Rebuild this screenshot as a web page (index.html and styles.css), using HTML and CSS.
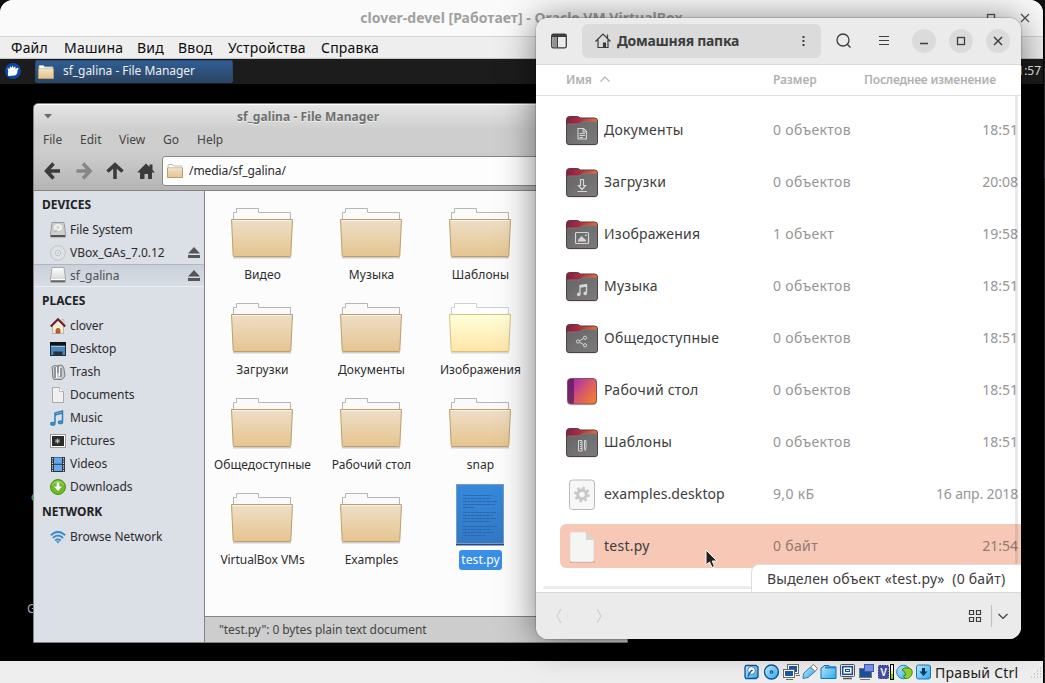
FILE: index.html
```
<!DOCTYPE html>
<html lang="ru">
<head>
<meta charset="utf-8">
<title>clover-devel</title>
<link rel="stylesheet" href="styles.css">
</head>
<body>
<svg width="0" height="0" class="defs">
  <defs>
    <linearGradient id="gTan" x1="0" y1="0" x2="0" y2="1"><stop offset="0" stop-color="#eedfc8"/><stop offset="1" stop-color="#e6c48f"/></linearGradient>
    <linearGradient id="gYel" x1="0" y1="0" x2="0" y2="1"><stop offset="0" stop-color="#ffffdc"/><stop offset="1" stop-color="#ffe6a6"/></linearGradient>
    <linearGradient id="gBlue" x1="0" y1="0" x2="0" y2="1"><stop offset="0" stop-color="#3689dd"/><stop offset="1" stop-color="#3279c5"/></linearGradient>
    <linearGradient id="gTab" x1="0" y1="0" x2="1" y2="0"><stop offset="0" stop-color="#861e42"/><stop offset=".45" stop-color="#a83246"/><stop offset="1" stop-color="#f0702c"/></linearGradient>
    <linearGradient id="gGrey" x1="0" y1="0" x2="1" y2="1"><stop offset="0" stop-color="#646464"/><stop offset="1" stop-color="#7c7c7c"/></linearGradient>
    <linearGradient id="gDesk" x1="0" y1="0" x2="1" y2=".7"><stop offset="0" stop-color="#a42a98"/><stop offset=".3" stop-color="#b43c98"/><stop offset=".6" stop-color="#d6586a"/><stop offset="1" stop-color="#f37a35"/></linearGradient>
    <linearGradient id="gSky" x1="0" y1="0" x2="1" y2="1"><stop offset="0" stop-color="#c5f1ff"/><stop offset="1" stop-color="#28a9ee"/></linearGradient>
    <linearGradient id="gDisk" x1="0" y1="0" x2="0" y2="1"><stop offset="0" stop-color="#fff"/><stop offset="1" stop-color="#cfcfcf"/></linearGradient>
    <symbol id="folder" viewBox="0 0 64 54">
      <path d="M3.500 12V5.500H6.500V1.500H28.500V5.500H60.500V12" fill="#fafafa" stroke="#b6b6ba"/>
      <path d="M3 50.500h58" stroke="#000" stroke-opacity=".18" stroke-width="2"/>
      <path d="M1.500 12.500H62.500L60.800 48.500Q60.700 49.500 59.800 49.500H4.200Q3.300 49.500 3.200 48.500Z" fill="url(#gTan)" stroke="#baa06c"/>
      <path d="M2.500 13.500H61.500" stroke="#fff" stroke-opacity=".6"/>
    </symbol>
    <symbol id="folderlit" viewBox="0 0 64 54">
      <path d="M3.500 12V5.500H6.500V1.500H28.500V5.500H60.500V12" fill="#fff" stroke="#d0d0d4"/>
      <path d="M3 50.500h58" stroke="#000" stroke-opacity=".14" stroke-width="2"/>
      <path d="M1.500 12.500H62.500L60.800 48.500Q60.700 49.500 59.800 49.500H4.200Q3.300 49.500 3.200 48.500Z" fill="url(#gYel)" stroke="#d8c084"/>
    </symbol>
    <symbol id="minifolder" viewBox="0 0 16 14">
      <path d="M1 4V1.500Q1 .5 2 .5H5.500L6.500 2H14.500Q15 2 15 3V5" fill="#fff" stroke="#bbb"/>
      <path d="M.5 4H15.500V13.500H.5Z" fill="url(#gTan)" stroke="#b99f6e"/>
      <path d="M1 4.800H15" stroke="#fff" stroke-opacity=".6"/>
    </symbol>
    <symbol id="ufolder" viewBox="0 0 32 30">
      <rect x=".5" y="5" width="31" height="24.500" rx="3" fill="#000" opacity=".2"/>
      <path d="M.5 25V3.500Q.5 .5 3.500 .5H11.500Q13 .5 14 2H28.500Q31.500 2 31.500 5V25Z" fill="url(#gTab)" stroke="#5b3945"/>
      <path d="M.5 8.500Q1.500 7.800 3 7.800H12Q13.500 7.800 14.800 6.500T17.500 5.500H29.500Q31 5.500 31.500 6.500V26Q31.500 28.500 29 28.500H3Q.5 28.500 .5 26Z" fill="url(#gGrey)"/>
      <path d="M.5 8V26Q.5 28.500 3 28.500H29Q31.500 28.500 31.500 26V7" fill="none" stroke="#503f45"/>
      <path d="M1.500 8H12.500Q14.500 8 15.600 6.800T18 5.700H30.800" fill="none" stroke="#8e7a76" stroke-width=".7"/>
    </symbol>
    <symbol id="eject" viewBox="0 0 14 13"><path d="M1 7.500L7 1L13 7.500Z M1 9H13V12H1Z" fill="#555"/></symbol>
  </defs>
</svg>
<main class="screen">
  <section class="vm">
    <header class="vm-title"><b>clover-devel [Работает] - Oracle VM VirtualBox</b>
      <svg class="vm-buttons" width="50" height="16" fill="none" stroke="#555" stroke-width="1.3"><rect x="6.500" y="4.500" width="7" height="7"/><path d="M40 4l8 8m0-8l-8 8"/></svg>
    </header>
    <nav class="vm-menu"><span>Файл</span><span>Машина</span><span>Вид</span><span>Ввод</span><span>Устройства</span><span>Справка</span></nav>
    <div class="guest">
      <div class="panel">
        <svg width="16" height="16" viewBox="0 0 16 16"><circle cx="8" cy="8" r="8" fill="#0b47a6"/><path d="M2.500 5L4.500 6 5 3.200 6.600 4.700 7.600 2.600 8.500 4.700 10.200 3.200 10.700 6Q13 4 13.400 5 13.500 6 12.500 7.500 12.500 12 9.500 12.500L4 13Q2.200 12.700 3 11.500Q3.700 8 2.500 5Z" fill="#fff"/></svg>
        <div class="task"><svg width="16" height="14"><use href="#minifolder"/></svg><span>sf_galina - File Manager</span></div>
        <span class="clock">21:57</span>
      </div>
      <span class="stray green">c</span><span class="stray letter">G</span>
      <section class="thunar">
        <header class="th-title"><svg width="8" height="5"><path d="M0 0H8L4 4.500Z" fill="#6b6b6b"/></svg><b>sf_galina - File Manager</b></header>
        <nav class="th-menu"><span>File</span><span>Edit</span><span>View</span><span>Go</span><span>Help</span></nav>
        <div class="th-tools">
          <svg width="120" height="18" fill="none" stroke="#3b3b3b" stroke-width="3.600">
            <path d="M9.500 1.500L2.600 9L9.500 16.500M3 9H16"/>
            <path d="M39 1.500L46 9L39 16.500M45.500 9H32.500" stroke="#878787"/>
            <path d="M63.500 9.500L71 2.600L78.500 9.500M71 3V17"/>
            <path d="M93.500 10L102 1.500L105.500 5V2.500H108.500V8L110.500 10V10.500H108V17H104V12H100.500V17H96V10.500H93.500Z" fill="#3b3b3b" stroke="none"/>
          </svg>
          <div class="path"><svg width="16" height="14"><use href="#minifolder"/></svg><span>/media/sf_galina/</span></div>
        </div>
        <div class="th-body">
          <aside class="side">
            <h4>DEVICES</h4>
            <div class="it"><svg viewBox="0 0 16 16"><path d="M2 .5H14L15.500 12V15H.5V12Z" fill="#d0d0d0" stroke="#9a9a9a"/><ellipse cx="8" cy="5.500" rx="5" ry="4.200" fill="#eee" stroke="#bbb" stroke-width=".8"/><circle cx="8" cy="5.500" r="1.300" fill="#ccc"/><path d="M4 10L7 8" stroke="#aaa"/><path d="M1 13H15V15H1Z" fill="#555"/></svg><span>File System</span></div>
            <div class="it"><svg viewBox="0 0 16 16"><circle cx="8" cy="8" r="7.300" fill="#dfe2e6" stroke="#bfc4c8"/><circle cx="8" cy="8" r="2.700" fill="#e8eaed" stroke="#bfc4c8"/><circle cx="8" cy="8" r=".8" fill="#aaa"/></svg><span>VBox_GAs_7.0.12</span><svg class="ej"><use href="#eject"/></svg></div>
            <div class="it on"><svg viewBox="0 0 16 16"><path d="M2 .5H14L15.500 12V15H.5V12Z" fill="url(#gDisk)" stroke="#aaa"/><path d="M1 12.500H15" stroke="#fff"/><path d="M1 13.300H15V15.200H1Z" fill="#666"/></svg><span>sf_galina</span><svg class="ej"><use href="#eject"/></svg></div>
            <h4>PLACES</h4>
            <div class="it"><svg viewBox="0 0 16 16"><path d="M2.500 7L8 2L13.500 7V15.500H2.500Z" fill="#f6eadb" stroke="#b9a58c" stroke-width=".8"/><path d="M12 1.500H14V6H12Z" fill="#e9dcc9" stroke="#a98" stroke-width=".5"/><path d="M.8 8.500L8 1.200L15.200 8.500" fill="none" stroke="#6a1c22" stroke-width="2"/><path d="M6 15V11.500Q8 9 10 11.500V15Z" fill="#c9631d" stroke="#7c3a12" stroke-width=".6"/></svg><span>clover</span></div>
            <div class="it"><svg viewBox="0 0 16 16"><rect x=".5" y="1.500" width="15" height="13" fill="#4b86b8" stroke="#1a2c3c"/><path d="M0 1H16V4.500H0Z" fill="#111"/><path d="M1 5.500H15" stroke="#9cc4e2"/><path d="M3.500 10.500H12.500V14.500H3.500Z" fill="#26333f"/></svg><span>Desktop</span></div>
            <div class="it"><svg viewBox="0 0 16 16"><path d="M2 3Q4 .5 7 2L11 1Q14 2 14 5L15 12L12 15.500H4L3 14Z" fill="#c9ccd0" stroke="#777c82"/><path d="M5 3V14M8 2V9M11 4V13" stroke="#6e7277" stroke-width="1.200"/><path d="M6.500 3V14M9.500 3V12" stroke="#fff"/></svg><span>Trash</span></div>
            <div class="it"><svg viewBox="0 0 16 16"><path d="M2.500 .5H9.500L13.500 4.500V15.500H2.500Z" fill="#f0f0ee" stroke="#aaa"/><path d="M9.500 .5V4.500H13.500" fill="#fff" stroke="#bbb"/></svg><span>Documents</span></div>
            <div class="it"><svg viewBox="0 0 16 16" fill="none" stroke="#2f7fbc" stroke-width="1.500"><path d="M5 13V3L12.500 1V11.500"/><path d="M5 5L12.500 3"/><ellipse cx="2.800" cy="13.700" rx="2" ry="1.300" fill="#5aa5dc"/><ellipse cx="10.500" cy="12.200" rx="2" ry="1.300" fill="#5aa5dc"/></svg><span>Music</span></div>
            <div class="it"><svg viewBox="0 0 16 16"><rect x=".5" y="1.500" width="15" height="13" fill="#fff" stroke="#999"/><rect x="2" y="3" width="12" height="10" fill="#2b2b2b"/><path d="M5 8H10M7.500 5.500V10.500M5.800 6.300L9.200 9.700M9.200 6.300L5.800 9.700" stroke="#ccc" stroke-width=".9"/></svg><span>Pictures</span></div>
            <div class="it"><svg viewBox="0 0 16 16"><rect x="1" y="1" width="14" height="15" fill="#2c3036"/><path d="M4 1.500H12V7.700H4ZM4 8.700H12V15H4Z" fill="#62a8f0"/><path d="M2.500 2V15.500M13.500 2V15.500" stroke="#ddd" stroke-width="1.200" stroke-dasharray="1.200 1.200"/></svg><span>Videos</span></div>
            <div class="it"><svg viewBox="0 0 16 16"><circle cx="8" cy="8" r="7.500" fill="#6cbb28" stroke="#4b9413"/><path d="M2 6Q8 -1 14 6" fill="none" stroke="#a6e06d"/><path d="M6.700 3.500H9.300V7.500H12L8 12L4 7.500H6.700Z" fill="#fff"/></svg><span>Downloads</span></div>
            <h4 class="net">NETWORK</h4>
            <div class="it"><svg viewBox="0 0 16 16" fill="none" stroke="#3e8cc7" stroke-width="2"><path d="M.8 6.200Q8 -.5 15.200 6.200M3 9Q8 4 13 9M5.200 11.600Q8 8.800 10.800 11.600"/><path d="M6 12.300H10L8 14.500Z" fill="#3e8cc7" stroke="none"/></svg><span>Browse Network</span></div>
          </aside>
          <div class="content">
            <div class="icons">
              <figure><svg><use href="#folder"/></svg><figcaption>Видео</figcaption></figure>
              <figure><svg><use href="#folder"/></svg><figcaption>Музыка</figcaption></figure>
              <figure><svg><use href="#folder"/></svg><figcaption>Шаблоны</figcaption></figure>
              <figure><svg><use href="#folder"/></svg><figcaption>Загрузки</figcaption></figure>
              <figure><svg><use href="#folder"/></svg><figcaption>Документы</figcaption></figure>
              <figure><svg><use href="#folderlit"/></svg><figcaption>Изображения</figcaption></figure>
              <figure><svg><use href="#folder"/></svg><figcaption>Общедоступные</figcaption></figure>
              <figure><svg><use href="#folder"/></svg><figcaption>Рабочий стол</figcaption></figure>
              <figure><svg><use href="#folder"/></svg><figcaption>snap</figcaption></figure>
              <figure><svg><use href="#folder"/></svg><figcaption class="latin">VirtualBox VMs</figcaption></figure>
              <figure><svg><use href="#folder"/></svg><figcaption class="latin">Examples</figcaption></figure>
              <figure class="file"><svg viewBox="0 0 50 62"><path d="M1 60.500H49" stroke="#234d7d" stroke-width="2"/><rect x="1.500" y=".5" width="47" height="59" fill="url(#gBlue)" stroke="#7a9cc0"/><path d="M8 11.500H37M8 14.500H36M8 17.500H42M8 20.500H40M8 23.500H19M8 28.500H41M8 31.500H38M8 34.500H41M8 37.500H36M8 42.500H42M8 45.500H36M8 48.500H39M8 51.500H31" stroke="#2b67ab" stroke-dasharray="4 .7 2.500 .5"/></svg><figcaption>test.py</figcaption></figure>
            </div>
            <footer>"test.py": 0 bytes plain text document</footer>
          </div>
        </div>
      </section>
    </div>
    <footer class="vm-status">
      <svg width="188" height="18" viewBox="0 0 188 18">
        <g stroke="#174f96" stroke-width="1.300">
          <path d="M2 2.500H12L14 4V14L12 15.500H2L1 14V4Z" fill="url(#gSky)"/><circle cx="7.500" cy="7.500" r="3.800" fill="#fff" stroke-width=".6"/><path d="M8.500 7L6.500 8.500L4 13.500" fill="none"/>
          <circle cx="27.500" cy="9" r="7" fill="url(#gSky)"/><circle cx="27.500" cy="9" r="1.200" fill="#fff"/>
        </g>
        <g stroke="#6d6d6d"><rect x="43.500" y="1.500" width="11" height="9" fill="#fff"/><rect x="45" y="3" width="8" height="6" fill="#1958a8" stroke="none"/><rect x="39.500" y="6.500" width="11" height="8" fill="#fff"/><rect x="41" y="8" width="8" height="5" fill="#1958a8" stroke="none"/><path d="M42 16.500H49M52 12.500H56"/></g>
        <path d="M59 15.500L59.500 10.500L66 4.500Q69 5 71 8.500L64 14.500Z" fill="url(#gSky)" stroke="#3f79b5"/><path d="M66.500 4L69.500 1.500L73.500 5.500L71 8.500Z" fill="#fff" stroke="#777"/>
        <path d="M77 5L79 4L80 2.500H85L86 4H92V15.500H77Z" fill="url(#gSky)" stroke="#1375bd"/><path d="M81 3.500H92V5.500H81Z" fill="#2287cf"/>
        <rect x="96.500" y="1.500" width="14" height="12" rx="1" fill="#eee" stroke="#555"/><rect x="98.700" y="3.700" width="9.600" height="7.600" fill="#fff" stroke="#1b50a0" stroke-width="1.500"/><rect x="101.500" y="6.500" width="4" height="2" fill="#fff" stroke="#1b50a0"/><path d="M99 15.500H108" stroke="#555" stroke-width="1.500"/>
        <rect x="115.500" y="5.500" width="12" height="9" fill="#1b50a0" stroke="#777"/><rect x="120.500" y="1.500" width="9" height="7" fill="#7a94ea" stroke="#4358aa"/><path d="M116 16.500H126" stroke="#777"/>
        <rect x="134.500" y="2.500" width="10" height="13" rx="1" fill="#434ba8" stroke="#272c74" stroke-dasharray="1.500 1"/><text x="136.200" y="12.500" class="v">V</text><rect x="146.500" y="1.500" width="3" height="15" fill="#fff" stroke="#000"/><path d="M148 8V11" stroke="#ff0" stroke-width="2"/><path d="M148 11V16" stroke="#70df00" stroke-width="2"/>
        <circle cx="159.500" cy="9" r="6.800" fill="url(#gSky)" stroke="#2882b7"/><path d="M160 5L165 5Q169 6 168 11Q166 16 161 15.500L159.500 13L162 12L160 8L158 7Z" fill="#8ed52f" stroke="#438817"/>
        <rect x="172.500" y="2" width="14" height="14" rx="2" fill="url(#gSky)" stroke="#2278b8"/><path d="M179.500 5V9" stroke="#0c3772" stroke-width="3"/><path d="M175.500 8.500H183.500L179.500 13Z" fill="#0c3772"/>
      </svg>
      <span>Правый Ctrl</span>
      <svg width="12" height="12"><path d="M9 2h2M6 5h5M3 8h8M0 11h11" stroke="#aaa" stroke-dasharray="1 2"/></svg>
    </footer>
  </section>

  <section class="naut">
    <header class="n-head">
      <svg width="18" height="18" viewBox="0 0 18 18"><rect x="1.700" y="2.200" width="14.600" height="13.600" rx="1.500" fill="none" stroke="#3d3d3d" stroke-width="1.300"/><path d="M2 2H16V5H2Z" fill="#3d3d3d"/><path d="M2.500 5H7V15H2.500Z" fill="#929292"/><path d="M7.500 5V15.500" stroke="#3d3d3d"/></svg>
      <div class="crumb">
        <svg width="16" height="16" viewBox="0 0 16 16" fill="none" stroke="#3d3d3d" stroke-width="1.200"><path d="M.5 8.500L8 1L15.500 8.500M12.500 1.500V5M3 6.500V14.500H13V6.500"/><path d="M8.500 14V10H10.500V14Z" fill="#3d3d3d"/></svg>
        <b>Домашняя папка</b>
        <svg width="4" height="12"><path d="M.5 1h2v2h-2zM.5 5h2v2h-2zM.5 9h2v2h-2z" fill="#3d3d3d"/></svg>
      </div>
      <svg class="search" width="16" height="16" fill="none" stroke="#3d3d3d" stroke-width="1.300"><circle cx="7" cy="7" r="6"/><path d="M11.200 11.200L14.500 14.500"/></svg>
      <svg class="burger" width="12" height="12"><path d="M1 1.500H11M1 5.500H11M1 9.500H11" stroke="#3d3d3d" stroke-width="1.200"/></svg>
      <i class="rb"><svg><path d="M8 14.500H16" stroke="#3d3d3d" stroke-width="1.300"/></svg></i>
      <i class="rb"><svg><rect x="8.500" y="8.500" width="7" height="7" fill="none" stroke="#3d3d3d" stroke-width="1.300"/></svg></i>
      <i class="rb"><svg><path d="M8 8L16 16M16 8L8 16" stroke="#3d3d3d" stroke-width="1.500"/></svg></i>
    </header>
    <div class="n-cols"><span>Имя <svg width="10" height="6"><path d="M.5 5.500L5 1L9.500 5.500" fill="none" stroke="#b4b4b4" stroke-width="1.200"/></svg></span><span>Размер</span><span class="last">Последнее изменение</span></div>
    <div class="n-list">
      <div class="row"><svg viewBox="0 0 32 30"><use href="#ufolder"/><path d="M12 12.500H17.500L20.500 15.500V23H12Z M17 12.500V16H20.500M13.500 17.500H19M13.500 19.500H19M13.500 21.500H17" fill="none" stroke="#d6d6d6" stroke-width="1.100"/></svg><span>Документы</span><em>0 объектов</em><em>18:51</em></div>
      <div class="row"><svg viewBox="0 0 32 30"><use href="#ufolder"/><path d="M14.500 11.500H17.500V17.500H19.500L16 21.500L12.500 17.500H14.500ZM11.500 23.500H21" fill="none" stroke="#d6d6d6" stroke-width="1.200"/></svg><span>Загрузки</span><em>0 объектов</em><em>20:08</em></div>
      <div class="row"><svg viewBox="0 0 32 30"><use href="#ufolder"/><rect x="9.500" y="12.500" width="13" height="11" rx="1" fill="none" stroke="#d6d6d6" stroke-width="1.200"/><path d="M12 21.500V20L15.500 16L18 18.500L20 20V21.500ZM19 14.500H20.500V16H19Z" fill="#d6d6d6"/></svg><span>Изображения</span><em>1 объект</em><em>19:58</em></div>
      <div class="row"><svg viewBox="0 0 32 30"><use href="#ufolder"/><path d="M14 22V13.500L20.500 12.500V21M14 15L20.500 14" fill="none" stroke="#d6d6d6" stroke-width="1.300"/><circle cx="12.700" cy="22.400" r="1.800" fill="#d6d6d6"/><circle cx="19.200" cy="21.400" r="1.800" fill="#d6d6d6"/></svg><span>Музыка</span><em>0 объектов</em><em>18:51</em></div>
      <div class="row"><svg viewBox="0 0 32 30"><use href="#ufolder"/><g fill="none" stroke="#d6d6d6"><circle cx="12" cy="17.500" r="1.600"/><circle cx="19" cy="13.700" r="1.600"/><circle cx="19" cy="21.300" r="1.600"/><path d="M13.500 16.700L17.500 14.500M13.500 18.300L17.500 20.500"/></g></svg><span>Общедоступные</span><em>0 объектов</em><em>18:51</em></div>
      <div class="row"><svg viewBox="0 0 32 30"><rect x="1" y="3" width="30" height="26.300" rx="4" fill="#000" opacity=".2"/><rect x="1.500" y="2.500" width="29" height="25.500" rx="3.500" fill="url(#gDesk)" stroke="#84506a"/><path d="M8 3H5Q2 3 2 6V24.500Q2 27.500 5 27.500H8Z" fill="#5c175e" opacity=".72"/></svg><span>Рабочий стол</span><em>0 объектов</em><em>18:51</em></div>
      <div class="row"><svg viewBox="0 0 32 30"><use href="#ufolder"/><path d="M12.500 12.500H16V23H12.500ZM14 14.500H16M14 16.500H16M14 18.500H16M14 20.500H16M18.500 12.500H20V20L19.200 22.500L18.500 20Z" fill="none" stroke="#d6d6d6"/></svg><span>Шаблоны</span><em>0 объектов</em><em>18:51</em></div>
      <div class="row"><svg viewBox="0 0 32 30"><rect x="3.500" y="0" width="25" height="29.500" rx="3" fill="#f7f7f7" stroke="#b9b9b9"/><circle cx="16" cy="14.500" r="4.300" fill="none" stroke="#c9c9c9" stroke-width="3.200"/><circle cx="16" cy="14.500" r="6.600" fill="none" stroke="#c9c9c9" stroke-width="2.600" stroke-dasharray="2.600 2.584"/></svg><span class="latin">examples.desktop</span><em>9,0 кБ</em><em class="tight">16 апр. 2018</em></div>
      <div class="row sel"><svg viewBox="0 0 32 30"><path d="M4 29H28Q29 29 28.500 30.500H4Z" fill="#a88577"/><path d="M5 0H20L28 8V28Q28 30 26 30H6Q4 30 4 28V1Q4 0 5 0Z" fill="#f5f5f4" stroke="#ddd3ce" stroke-width=".7"/><path d="M20 0L28 8H21.500Q20 8 20 6.500Z" fill="#d7d4d2"/></svg><span>test.py</span><em>0 байт</em><em>21:54</em></div>
      <div class="vbar"></div><div class="hbar"></div>
      <div class="float">Выделен объект «test.py»&nbsp; (0 байт)</div>
    </div>
    <footer class="n-foot">
      <svg width="50" height="16" fill="none" stroke="#cfcfcf" stroke-width="1.200"><path d="M7 1L3 8L7 15M43 1L47 8L43 15"/></svg>
      <svg class="view" width="46" height="24" fill="none" stroke="#3d3d3d" stroke-width="1.200"><path d="M2.500 6.500h4v4h-4zM9.500 6.500h4v4h-4zM2.500 13.500h4v4h-4zM9.500 13.500h4v4h-4z"/><path d="M24.500 1V23" stroke="#c0c0c0"/><path d="M31.500 10L36 14.500L40.500 10"/></svg>
    </footer>
  </section>
  <svg class="cursor" width="14" height="20" viewBox="0 0 14 20"><path d="M1 1V16L4.500 13L7 18.500L9.500 17.300L7.200 12H12Z" fill="#222" stroke="#fff"/></svg>
</main>
</body>
</html>
```
FILE: styles.css
```
* { box-sizing: border-box; }
body { margin: 0; overflow: hidden; background: #000; font-family: "Noto Sans", "Open Sans", sans-serif; }
svg { display: block; flex: none; }
.defs { position: absolute; }
.screen { position: relative; width: 1045px; height: 683px; overflow: hidden; background: linear-gradient(#111 0 68px, #292929 68px 115px, #222 115px 160px, #3b3440 160px 178px, #202020 178px); }
span, b, em, figcaption { white-space: nowrap; }

.vm { width: 1043px; height: 683px; display: flex; flex-direction: column; border-radius: 13px 13px 0 0; overflow: hidden; background: #eee; box-shadow: 0 0 0 1px #000; }
.vm-title { height: 37px; flex: none; background: #fafafa; border-bottom: 1px solid #d4d4d4; display: flex; align-items: center; justify-content: center; position: relative; color: #a0a0a0; font-size: 14px; letter-spacing: .02px; }
.vm-title b { padding-bottom: 2px; }
.vm-buttons { position: absolute; right: 12px; top: 10px; }
.vm-menu { height: 22px; flex: none; background: #eee; border-bottom: 1px solid #c5c5c5; display: grid; grid-template-columns: 53px 73px 41px 50px 93px 60px; align-items: center; padding-left: 11px; font-size: 14px; color: #0c0c0c; letter-spacing: .2px; }
.guest { height: 602px; flex: none; position: relative; background: #000; overflow: hidden; }
.panel { height: 25px; background: #1c1c1c; display: flex; align-items: center; padding-left: 5px; gap: 14px; font-size: 12px; color: #eee; }
.panel > svg { margin-top: -1px; }
.panel span { padding-bottom: 2px; letter-spacing: -.04px; }
.task { width: 198px; height: 23px; border-radius: 2px; background: linear-gradient(#2f5d93, #2b4563); border: 1px solid #284a70; display: flex; align-items: center; gap: 9px; padding-left: 2px; }
.clock { margin: 0 2px 0 auto; }
.stray { position: absolute; left: 31px; top: 429px; font: 12px "Noto Sans", sans-serif; color: #4b9; }
.stray.letter { left: 27px; top: 541px; color: #aab; }

.thunar { position: absolute; left: 33px; top: 44px; width: 595px; height: 540px; border: 1px solid #838383; border-radius: 5px 5px 0 0; background: linear-gradient(#e6e6e6, #cecece 26px, #cecece 48px, #b4b4b4 86px); box-shadow: inset 0 1px #fff; display: flex; flex-direction: column; font-size: 12px; color: #2c2c2c; }
.th-title { height: 24px; display: flex; align-items: center; padding-left: 10px; color: #6e6e6e; text-shadow: 0 1px #f2f2f2; }
.th-title b { margin-left: 185px; letter-spacing: .08px; }
.th-menu { height: 24px; display: grid; grid-template-columns: 37px 39px 44px 34px 40px; align-items: center; padding: 0 0 2px 9px; color: #444; }
.th-tools { height: 38px; display: flex; align-items: center; padding-left: 10px; }
.th-tools > svg { margin-right: -2px; }
.path { width: 440px; height: 30px; background: #fdfdfd; border: 1px solid #888; border-radius: 3px; display: flex; align-items: center; padding-left: 4px; gap: 6px; }
.path span { padding-bottom: 2px; letter-spacing: -.08px; }
.th-body { flex: 1; display: flex; border-top: 1px solid #838383; }
.side { width: 171px; background: #dbdfe6; border-right: 1px solid #838383; padding-top: 2px; }
.side h4 { margin: 0; padding-left: 8px; height: 25px; line-height: 23px; font-size: 12px; color: #222; }
.side h4.net { margin-top: 2px; }
.it { height: 23px; display: flex; align-items: center; gap: 4px; padding: 0 3px 0 16px; letter-spacing: -.03px; }
.it > svg { width: 16px; height: 16px; }
.it > svg.ej { margin-left: auto; width: 14px; height: 13px; }
.it.on { height: 22px; color: #505050; background: linear-gradient(#c9d0d9, #d7dde4); box-shadow: inset 0 1px #b2b7bd, 0 1px #eceff3; margin-bottom: 3px; }
.content { flex: 1; display: flex; flex-direction: column; background: #fcfcfc; }
.icons { flex: 1; padding: 16px 0 0 3px; display: grid; grid-template-columns: repeat(3, 109px); grid-auto-rows: 95px; justify-content: start; }
figure { margin: 0; display: flex; flex-direction: column; align-items: center; }
figure svg { width: 64px; height: 54px; margin-right: 2px; }
figcaption { margin-top: 4px; height: 20px; line-height: 19px; padding: 0 2px; border-radius: 3px; letter-spacing: .09px; }
figcaption.latin { letter-spacing: -.05px; }
.file svg { width: 50px; height: 62px; margin-top: -8px; }
.file figcaption { background: #398ee7; color: #fff; }
.content footer { height: 26px; background: #cdcdcd; border-top: 1px solid #838383; line-height: 25px; padding-left: 14px; color: #444; letter-spacing: -.08px; }
.vm-status { height: 22px; flex: none; background: #eee; display: flex; justify-content: flex-end; align-items: center; gap: 3px; font-size: 14px; color: #222; }
.vm-status .v { font: bold 10px "Liberation Sans", sans-serif; fill: #fff; }
.vm-status span { width: 84px; margin-right: 9px; letter-spacing: .25px; }

.naut { position: absolute; left: 536px; top: 18px; width: 485px; height: 621px; border-radius: 12px; overflow: hidden; background: #fff; box-shadow: 0 0 1px 1px rgba(0,0,0,.15), 0 2px 36px rgba(0,0,0,.5); display: flex; flex-direction: column; color: #3d3d3d; font-size: 14px; }
.n-head { height: 47px; flex: none; background: #ebebeb; border-bottom: 1px solid #d9d9d9; display: flex; align-items: center; padding-left: 14px; }
.crumb { width: 239px; height: 34px; flex: none; margin-left: 14px; border-radius: 6px; background: #dbdbdb; display: flex; align-items: center; gap: 6px; padding: 0 15px 0 13px; }
.crumb b { letter-spacing: -.28px; padding-bottom: 1px; }
.crumb svg:last-child { margin-left: auto; }
.search { margin-left: 15px; }
.burger { margin: 0 22px 0 26px; }
.rb { width: 24px; height: 24px; flex: none; border-radius: 50%; background: #dbdbdb; margin-right: 13px; }
.rb svg { width: 24px; height: 24px; }
.n-cols { height: 31px; flex: none; border-bottom: 1px solid #e1e1e1; display: grid; grid-template-columns: 207px 91px 1fr; align-items: center; padding: 0 0 2px 30px; font-size: 12px; font-weight: 600; color: #b1b1b1; }
.n-cols span { display: flex; align-items: center; gap: 8px; letter-spacing: -.1px; }
.n-cols .last { letter-spacing: -.22px; }
.n-list { height: 496px; flex: none; position: relative; padding: 12px 0 0 24px; overflow: hidden; }
.row { height: 44px; margin-bottom: 8px; display: grid; grid-template-columns: 38px 169px 110px 1fr; align-items: center; padding: 0 3px 2px 6px; border-radius: 6px 0 0 6px; letter-spacing: .25px; }
.row > svg { width: 32px; height: 30px; margin-top: 4px; overflow: visible; }
.row .latin { letter-spacing: .09px; }
.row em { font-style: normal; color: #969696; letter-spacing: .33px; }
.row em:last-of-type { text-align: right; letter-spacing: 0; }
.row em.tight:last-of-type { letter-spacing: -.15px; }
.row.sel { background: #f7c8b6; }
.row.sel em { color: #93796f; }
.vbar { position: absolute; left: 479px; top: 0; width: 3px; height: 492px; background: rgba(0,0,0,.09); }
.hbar { position: absolute; left: 7px; top: 490px; width: 470px; height: 3px; background: #ececec; border-radius: 2px; }
.float { position: absolute; right: 0; bottom: 0; width: 270px; height: 28px; background: #fff; border: 1px solid #ddd; border-width: 1px 0 0 1px; border-radius: 8px 0 0 0; padding-left: 15px; line-height: 27px; white-space: nowrap; letter-spacing: .2px; }
.n-foot { height: 47px; flex: none; background: #ebebeb; border-top: 1px solid #d9d9d9; display: flex; align-items: center; justify-content: space-between; padding: 0 0 0 18px; }
.n-foot .view { margin-right: 8px; }
.cursor { position: absolute; left: 705px; top: 549px; }
```
